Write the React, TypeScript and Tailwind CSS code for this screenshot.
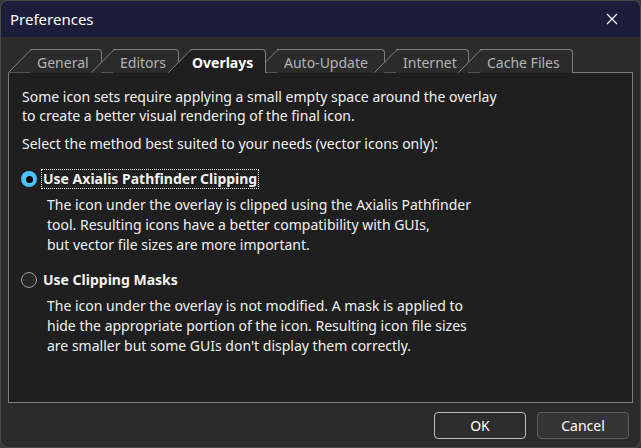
import React from 'react';

const FONT = { fontFamily: '"Noto Sans", "Open Sans", sans-serif' };

type TabDef = { id: string; label: string; w: string };

const TABS: TabDef[] = [
  { id: 'general', label: 'General', w: 'w-[94px]' },
  { id: 'editors', label: 'Editors', w: 'w-[88px]' },
  { id: 'overlays', label: 'Overlays', w: 'w-[98px]' },
  { id: 'update', label: 'Auto-Update', w: 'w-[130px]' },
  { id: 'internet', label: 'Internet', w: 'w-[95px]' },
  { id: 'cache', label: 'Cache Files', w: 'w-[115px]' },
];

const Tab: React.FC<{ tab: TabDef; active: boolean; first: boolean }> = ({ tab, active, first }) => (
  <div
    className={`relative h-[24px] shrink-0 pt-[3px] ${tab.w} ${first ? '' : '-ml-[11px]'} ${
      active ? 'z-20 pl-[24px] font-bold text-white' : 'z-0 pl-[29px] text-[#b4b4b4]'
    }`}
  >
    <svg className="absolute inset-0 h-full w-full overflow-visible">
      <TabShape active={active} />
    </svg>
    <span className="relative whitespace-nowrap text-[14px] leading-[20px]">{tab.label}</span>
  </div>
);

// slanted left edge in svg, top + right edge from a bordered box
const TabShape: React.FC<{ active: boolean }> = ({ active }) => (
  <>
    <foreignObject x="0" y="0" width="100%" height="100%">
      <div className="relative h-full w-full">
        <div
          className={`absolute left-[22px] right-0 top-0 rounded-tr-[4px] border-t border-r border-[#7e7e7e] ${
            active ? '-bottom-px bg-[#1f1f1f]' : 'bottom-0 bg-[#2b2b2b]'
          }`}
        />
      </div>
    </foreignObject>
    <polygon points={active ? '0,24 23,0.5 23,24' : '0,23.5 23,0.5 23,23.5'} fill={active ? '#1f1f1f' : '#2b2b2b'} />
    <path d="M0.5,23.5 L21,2.5 Q22.5,0.5 25,0.5" fill="none" stroke="#7e7e7e" strokeWidth="1" />
  </>
);

const Radio: React.FC<{ checked: boolean }> = ({ checked }) =>
  checked ? (
    <span className="flex h-[16px] w-[16px] items-center justify-center rounded-full bg-[#4cc2ff]">
      <span className="block h-[7px] w-[7px] rounded-full bg-black" />
    </span>
  ) : (
    <span className="block h-[16px] w-[16px] rounded-full border border-[#9c9c9c] bg-[#262626]" />
  );

const Option: React.FC<{ checked: boolean; label: string; lines: string[] }> = ({ checked, label, lines }) => (
  <div>
    <div className="flex items-center">
      <div className="ml-[12px] mr-[4px]">
        <Radio checked={checked} />
      </div>
      <span
        className={`px-[1px] font-bold leading-[18px] ${
          checked ? 'border border-dotted border-white' : 'border border-transparent'
        }`}
      >
        {label}
      </span>
    </div>
    <div className="mt-[6px] pl-[38px] leading-[20px]">
      {lines.map((l) => (
        <div key={l}>{l}</div>
      ))}
    </div>
  </div>
);

const App: React.FC = () => (
  <div className="h-[448px] w-[641px] bg-[#3a3a3a]" style={FONT}>
    <div className="flex h-full w-full flex-col overflow-hidden rounded-[8px] border border-[#4a4a4a] bg-[#2b2b2b] text-[14px] text-[#f2f2f2]">
      <div className="flex h-[36px] shrink-0 items-center justify-between bg-[#1c1d3b] pl-[9px] pr-[22px]">
        <span className="text-[15px] text-white">Preferences</span>
        <svg width="12" height="12" viewBox="0 0 12 12">
          <path d="M1,1 L11,11 M11,1 L1,11" stroke="#ffffff" strokeWidth="1.1" />
        </svg>
      </div>

      <div className="flex flex-1 flex-col px-[7px] pt-[12px] pb-[8px]">
        <div className="relative z-10 flex h-[24px]">
          {TABS.map((t, i) => (
            <Tab key={t.id} tab={t} active={t.id === 'overlays'} first={i === 0} />
          ))}
        </div>
        <div className="-mt-px h-[331px] border border-[#7e7e7e] bg-[#1f1f1f] pl-[13px] pr-[10px] pt-[14px]">
          <p className="leading-[19px]">
            Some icon sets require applying a small empty space around the overlay
            <br />
            to create a better visual rendering of the final icon.
          </p>
          <p className="mt-[9px] leading-[19px]">Select the method best suited to your needs (vector icons only):</p>
          <div className="-ml-[13px] mt-[16px]">
            <Option
              checked
              label="Use Axialis Pathfinder Clipping"
              lines={[
                'The icon under the overlay is clipped using the Axialis Pathfinder',
                'tool. Resulting icons have a better compatibility with GUIs,',
                'but vector file sizes are more important.',
              ]}
            />
          </div>
          <div className="-ml-[13px] mt-[15px]">
            <Option
              checked={false}
              label="Use Clipping Masks"
              lines={[
                'The icon under the overlay is not modified. A mask is applied to',
                'hide the appropriate portion of the icon. Resulting icon file sizes',
                "are smaller but some GUIs don't display them correctly.",
              ]}
            />
          </div>
        </div>

        <div className="mt-[9px] flex justify-end gap-[11px] pr-[4px]">
          <button className="h-[27px] w-[92px] rounded-[4px] border border-[#bdbdbd] bg-[#2d2d2d] text-white">OK</button>
          <button className="h-[27px] w-[92px] rounded-[4px] border border-[#5e5e5e] bg-[#353535] text-white">Cancel</button>
        </div>
      </div>
    </div>
  </div>
);

export default App;
